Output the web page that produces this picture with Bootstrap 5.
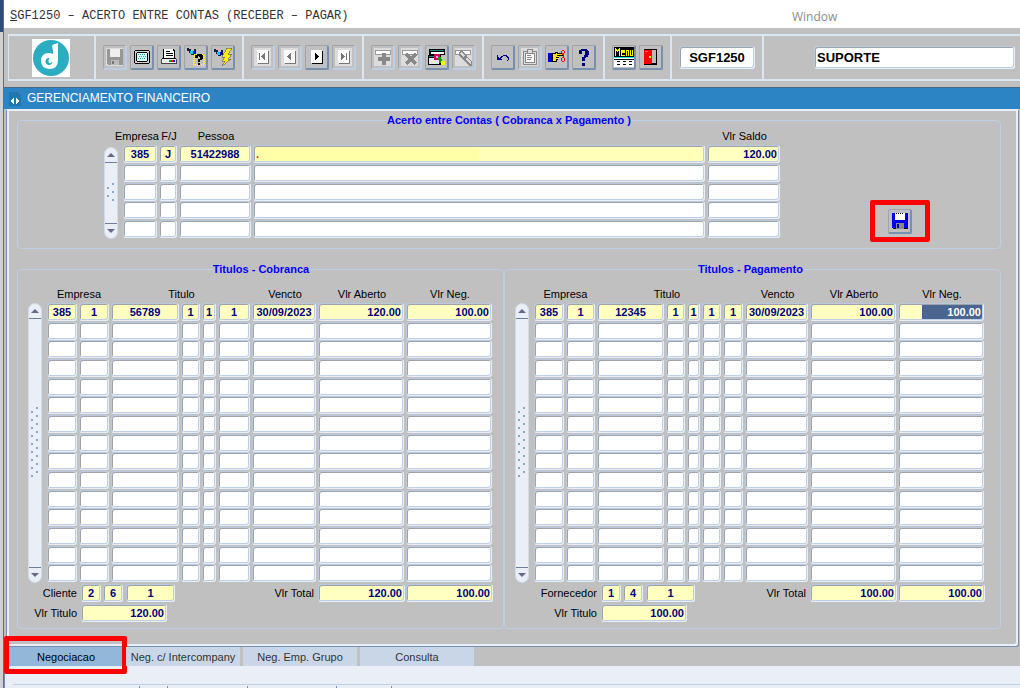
<!DOCTYPE html>
<html lang="pt-BR">
<head>
<meta charset="utf-8">
<meta name="viewport" content="width=device-width, initial-scale=1">
<title>SGF1250 - Acerto entre Contas</title>
<link href="https://cdn.jsdelivr.net/npm/bootstrap@5.3.0/dist/css/bootstrap.min.css" rel="stylesheet">
<style>
:root { --face:#c0c0c0; --pale:#e9eef7; --line:#bccfe6; --steel:#7590b0; --shade:#9fa3aa; --field:#ffffc0; --navy:#000080; }
body { font:11px/13px "Liberation Sans",Arial,sans-serif; color:#000; background:var(--face); }
button, input { font:inherit; }
.desk-edge { flex:0 0 4px; border-right:1px solid #6c6c6c; background:linear-gradient(#2a4a80 32px,#d0d0d0 32px); }
.app { min-width:0; }
.menu-line { height:28px; padding-left:6px; padding-top:6px; background:#fff; }
.menu-line a { color:#333; text-decoration:none; }
.menu-title { flex:0 0 782px; font:12px/16px "Liberation Mono","Courier New",monospace; padding-top:2px; }
.menu-line .menu-window { font:12px/16px "Open Sans",sans-serif; color:#8c8c8c; padding-top:3px; }
.tool-area { padding:6px 0 6px 4px; }
.tool-box { height:47px; border:2px solid #dbe6f5; border-width:2px 0 2px 1px; }
.tool-group { display:flex; align-items:center; gap:3px; padding:0 7px; border-right:2px solid #dbe6f5; }
.tool-group.snug { padding-right:6px; }
.tool-group.brand { flex:0 0 87px; padding-left:23px; }
.tool-group.program { flex:0 0 92px; }
.user-slot { padding:0 5px 0 50px; }
.tool-btn { width:24px; height:25px; padding:0; display:flex; align-items:center; justify-content:center; background:var(--face); border:1px solid var(--shade); border-right:2px solid var(--steel); border-bottom:2px solid var(--steel); border-radius:2px; }
.tool-btn:disabled { border-right-color:var(--line); border-bottom-color:var(--line); background:#dcdcdc; box-shadow:inset 0 0 0 2px var(--face); }
.tool-btn svg, .pic svg { display:block; shape-rendering:crispEdges; overflow:visible; }
.brand svg { shape-rendering:auto; }
.cell { display:block; width:100%; height:18px; padding:0 2px; margin:0; background:#fff; color:var(--navy); font-weight:bold; border:1px solid #b9c9de; border-right-color:var(--pale); border-bottom-color:var(--pale); border-radius:3px; box-shadow:inset 1px 1px var(--shade), inset -1px -1px var(--line); outline:0; }
.cell.big { height:23px; color:#000; font-size:13px; }
.cell.filled { background:var(--field); }
.cell.masked { background:linear-gradient(90deg,#ffffa8 50%,#ffffba 50%); color:#a04020; }
.cell.chosen { background:linear-gradient(90deg,transparent 23px,#4a6590 23px) var(--field); color:#fff; }
.title-bar { height:22px; background:#2c84c4; border-top:1px solid #47688a; color:#fff; font-size:12px; gap:6px; padding-left:5px; }
.work { margin:0 1px 0 2px; padding:3px 17px 17px 10px; border:1px solid var(--steel); border-top:2px solid var(--pale); box-shadow:inset 2px 0 var(--pale), inset -2px -2px var(--pale); border-radius:0 0 3px 0; }
.work fieldset { border:1px solid var(--line); border-radius:4px; min-width:0; }
.work legend { float:none; width:auto; margin:0 auto; padding:0; font-size:11px; line-height:13px; font-weight:bold; color:#00f; }
.saldo-set { padding-bottom:9px; }
.saldo-body { padding:0 70px 0 86px; }
.pair { display:grid; grid-template-columns:486fr 496fr; margin-top:14px; }
.pair fieldset { padding:9px 9px 6px 10px; }
.pair fieldset + fieldset { padding-right:14px; }
.block { display:flex; align-items:flex-end; gap:5px; }
.grid-table { width:100%; table-layout:fixed; }
.grid-table th { height:18px; padding:0; font-weight:normal; text-align:center; white-space:nowrap; vertical-align:middle; }
.grid-table td { padding:0 2px 0 0; vertical-align:top; }
.short { height:112px; }
.tall { height:298px; }
.bar { flex:0 0 14px; display:flex; flex-direction:column; background:var(--pale); border:1px solid #cfdcec; border-radius:7px; }
.bar-short { height:92px; }
.bar-tall { height:280px; }
.bar button { height:15px; padding:0; border:0; background:none; display:flex; align-items:center; justify-content:center; }
.bar button:first-child { border-bottom:1px solid #6f7f98; }
.bar button:last-child { border-top:1px solid #6f7f98; }
.grip { flex:1; margin:20px 2px; background:radial-gradient(circle at 1px 5px,#8fa6c2 1px,transparent 1px),radial-gradient(circle at 6px 1px,#8fa6c2 1px,transparent 1px); background-size:8px 8px; }
.bar-tall .grip { margin:88px 2px; }
.mark-red { border:5px solid #f00; border-radius:2px; padding:4px 13px 3px; margin:0 0 -3px 88px; }
.foot-line { display:flex; align-items:center; margin-top:1px; }
.foot-line + .foot-line { margin-top:2px; }
.foot-line label { text-align:right; padding-right:4px; white-space:nowrap; }
.w-lab1 { width:53px; } .w-lab2 { width:86px; }
.w-id { width:20px; margin-right:2px; } .w-seq { width:49px; margin-left:1px; } .w-val { width:86px; }
.w-sum { width:87px; } .w-sum + .w-sum { margin-left:1px; margin-right:1px; }
.tab-strip { gap:3px; padding-left:5px; }
.tab-btn { width:114px; height:19px; padding:2px 0 0; border:0; background:#c9d6e8; color:#333; position:relative; white-space:nowrap; }
.tab-btn.current { background:#93b7d9; color:#000; }
.tab-btn.current::after { content:""; position:absolute; inset:-11px -4px -8px -5px; border:5px solid #f00; border-radius:2px; }
.tab-page { background:var(--pale); border-left:1px solid var(--steel); padding:18px 0 0 8px; }
.next-head { border-top:1px solid var(--line); padding-top:1px; height:4px; }
.next-head i { border-right:1px solid var(--steel); }
</style>
</head>
<body>
<svg width="0" height="0" class="position-absolute" aria-hidden="true">
  <symbol id="i-up" viewBox="0 0 8 4"><path d="M4 0 8 4H0z" fill="#66688a"/></symbol>
  <symbol id="i-down" viewBox="0 0 8 4"><path d="M0 0H8L4 4z" fill="#66688a"/></symbol>
</svg>
<div class="d-flex min-vh-100">
<div class="desk-edge"></div>
<div class="app flex-fill d-flex flex-column">
  <nav class="menu-line d-flex align-items-start">
    <div class="menu-title"><a href="#"><u>S</u>GF1250 – ACERTO ENTRE CONTAS (RECEBER – PAGAR)</a></div>
    <a href="#" class="menu-window">Window</a>
  </nav>
  <div class="tool-area">
    <div class="tool-box d-flex">
      <div class="tool-group brand pic">
        <svg width="38" height="38" viewBox="0 0 38 38"><path fill="#fff" d="M0 0h38v38H0z"/><circle cx="19" cy="19" r="18" fill="#2bacc1"/><path d="M20 7q1-2 3-2l3-1v17q0 9-8.500 9Q9 29.500 9 22q0-8 8-8 2 0 4 1 0-5-1-8z" fill="#fff"/><path d="M18 19q-4.500-.5-4.500 3.500 0 3.500 4 3.500 3-.5 2.500-3.500Q19 25 17 24q-1.500-3 1-5z" fill="#2bacc1"/></svg>
      </div>
      <div class="tool-group">
        <button class="tool-btn" disabled aria-label="Salvar"><svg width="16" height="16"><path d="M0 0h16v16H1L0 15z" fill="#969696"/><path d="M3 0h10v8H3z" fill="#eee"/><path d="M4 11h8v5H4z" fill="#bbb"/><path d="M5 12h2v3H5z" fill="#777"/></svg></button>
        <button class="tool-btn" aria-label="Tela"><svg width="16" height="14"><path d="M1 0h14v1h1v12h-1v1H1v-1H0V1h1z"/><path d="M1 1h14v12H1z" fill="#d0d0d0"/><path d="M3 2h10v1h1v8h-1v1H3v-1H2V3h1z"/><path d="M3 3h10v8H3z" fill="#d8ffff"/><path d="M4 4.500h1m1 0h1m1 0h1m1 0h1M5 6.500h1m1 0h1m1 0h1m1 0h1M4 8.500h1m1 0h1m1 0h1m1 0h1" stroke="#20b0b0"/></svg></button>
        <button class="tool-btn" aria-label="Imprimir"><svg width="16" height="16"><path d="M3 0h9l2 2v8H3z" fill="#fff"/><path d="M2 0h1v9H2zM12 0h1v1h1v8h-1V2h-1zM5 2h4v1H5zM5 4h7v1H5zM5 6h7v1H5zM1 9h14v1H1z"/><path d="M0 10h16v5H0z" fill="#eee"/><path d="M0 10h1v4H0zM15 10h1v4h-1zM0 14h16v1H0z" fill="#444"/><path d="M8 11h3v2H8z" fill="#0a0"/><path d="M10 11h2v2h-2z" fill="#f00"/><path d="M12 11h2v2h-2z" fill="#00f"/></svg></button>
        <button class="tool-btn" aria-label="Entrar consulta"><svg width="18" height="18"><path d="M0 0h2v1h2v2h3V1h2v5H7v1H4V5H2V3H0z" fill="#124"/><path d="M3 3h3v3H3z" fill="#0cf"/><path d="M6 3h2v3H6z" fill="#00c"/><path d="M7 7h10v10H7z" fill="none" stroke="#ff0" stroke-width="2" stroke-dasharray="1 1"/><path d="M8 7h2V6h5v1h1v4h-1v1h-2v2h-2v-3h2V9h-1V8h-1v2H8zM11 15h2v2h-2z"/></svg></button>
        <button class="tool-btn" aria-label="Executar consulta"><svg width="18" height="18"><path d="M0 1h2v1h2v2h3V2h2v5H7v1H4V6H2V4H0z" fill="#124"/><path d="M3 4h3v3H3z" fill="#0cf"/><path d="M6 4h2v3H6z" fill="#00c"/><path d="M13 0h5l-4 6h4l-4 5h3l-9 7 3-5H8l3-4H8z" fill="#fff000" stroke="#444" stroke-width=".5"/></svg></button>
      </div>
      <div class="tool-group snug">
        <button class="tool-btn" disabled aria-label="Primeiro"><svg width="12" height="14"><path d="M1 1h11v13H1z" fill="#777"/><path d="M0 0h11v13H0z" fill="#fafafa"/><path d="M2 3h1v7H2zM8 3v7L4 7V6z" fill="#777"/></svg></button>
        <button class="tool-btn" disabled aria-label="Anterior"><svg width="12" height="14"><path d="M1 1h11v13H1z" fill="#777"/><path d="M0 0h11v13H0z" fill="#fafafa"/><path d="M7 3v7L3 7V6z" fill="#777"/></svg></button>
        <button class="tool-btn" aria-label="Próximo"><svg width="12" height="14"><path d="M1 1h11v13H1z"/><path d="M0 0h11v13H0z" fill="#fff"/><path d="M4 3v7l4-3V6z"/></svg></button>
        <button class="tool-btn" disabled aria-label="Último"><svg width="12" height="14"><path d="M1 1h11v13H1z" fill="#777"/><path d="M0 0h11v13H0z" fill="#fafafa"/><path d="M8 3h1v7H8zM3 3v7l4-3V6z" fill="#777"/></svg></button>
      </div>
      <div class="tool-group snug">
        <button class="tool-btn" disabled aria-label="Inserir"><svg width="16" height="16"><path d="M0 1h15v4H0z" fill="#fff" stroke="#999"/><path d="M7 4h4v4h4v4h-4v4H7v-4H3V8h4z" fill="#888"/></svg></button>
        <button class="tool-btn" disabled aria-label="Excluir"><svg width="16" height="16"><path d="M0 1h15v4H0z" fill="#fff" stroke="#999"/><path d="m4 5 10 10M14 5 4 15" stroke="#888" stroke-width="3"/></svg></button>
        <button class="tool-btn" aria-label="Limpar"><svg width="18" height="17"><path d="M1 0h16v6H1z"/><path d="M2 1h14v1H2z" fill="#088"/><path d="M3 3h13v2H3z" fill="#fff"/><path d="M0 6h13v10H0z"/><path d="M1 7h6v1H1z" fill="#088"/><path d="M1 15V9h5l5 1v5z" fill="#e8e8e8"/><path d="M6 5h6v6H6z" fill="#e0005c"/><path d="M8 7h2v2H8z" fill="#f9f"/><path d="M10 8h3v2h1v4h-3v-3h-1z" fill="#00a000"/><path d="M13 12h4v4h-4z" fill="#ff0"/></svg></button>
        <button class="tool-btn" disabled aria-label="Editar"><svg width="17" height="17"><path d="M0 1h15v4H0z" fill="#fff" stroke="#999"/><path d="M4 3 7 1 17 13v4h-3L4 6z" fill="#888"/><path d="M5 4 7 3 10 7 8 8zM10 10l2-2 4 5v2z" fill="#ddd"/></svg></button>
      </div>
      <div class="tool-group">
        <button class="tool-btn" aria-label="Desfazer"><svg width="14" height="10"><path d="M1 3v5h5v-1H5V6h1V5h1V4h3v1h1v1h1v2h-1v1h1V8h1V5h-1V4h-1V3H7v1H5v1H4v1H3V5H2V3z" fill="#000080"/></svg></button>
        <button class="tool-btn" disabled aria-label="Colar"><svg width="15" height="16"><path d="M1 2h13v13H1z" fill="#ddd" stroke="#888"/><path d="M3 4h9v9H3z" fill="#fff" stroke="#888"/><path d="M5 0h5v4H5z" fill="#ddd" stroke="#888"/><path d="M5 6h4v1H5zM5 8h5v1H5zM5 10h4v1H5z" fill="#888"/></svg></button>
        <button class="tool-btn" aria-label="Lista de valores"><svg width="18" height="14"><path d="M0 3h4v9H0z" fill="#0000d0"/><path d="M4 3h3V2h3v1h5v3h-4v2h-1v2H9v2H4z"/><path d="M5 4h3V3h1v1h5v1H9v1h2v1H8v1h2v1H8v2H5z" fill="#ffe000"/><path d="M13 1h1v2h-1zM16 1h1v2h-1zM14 0h2v1h-2zM14 3h1v2h-1zM15 3h1v4h-1zM14 7h2v1h-2zM13 8h1v3h-1zM16 8h1v3h-1zM14 11h2v1h-2z" fill="#f00"/></svg></button>
        <button class="tool-btn" aria-label="Ajuda"><svg width="11" height="17"><path d="M1 1h2V0h6v1h1v1h1v4h-1v2H8v1H7v3H4V8h2V6h1V2H4v3H1z" fill="#000080"/><path d="M4 14h3v3H4z" fill="#000080"/></svg></button>
      </div>
      <div class="tool-group">
        <button class="tool-btn" aria-label="Menu"><svg width="20" height="20"><path d="M0 10h20v10H0z" fill="#fff"/><path d="M0 0h20v10H0zM0 12h20v1H0zM3 14h3v1H3zM9 14h3v1H9zM15 14h3v1h-3zM3 17h3v1H3zM9 17h3v1H9zM15 17h3v1h-3z"/><path d="M0 10h20v1H0z" fill="#0ee"/><path d="M1 9V1h1v1h1v1h1V2h1V1h1v8H5V4H4v1H3V4H2v5zM7 3h4v3H8v2h3v1H7zM12 3h3v6h-1V4h-1v5h-1zM16 3h1v5h1V3h1v6h-3z" fill="#ff0"/></svg></button>
        <button class="tool-btn" aria-label="Sair"><svg width="14" height="16"><path d="M0 0h13v16H0z"/><path d="M7 1h5v13H7z" fill="#bbb"/><path d="M0 1h8v13H7v1H0z" fill="#f00"/><path d="M1 2h3v1H1z" fill="#f66"/><path d="M5 7h2v2H5z" fill="#ff0"/></svg></button>
      </div>
      <div class="tool-group program"><input class="cell big text-center" value="SGF1250" aria-label="Programa"></div>
      <div class="user-slot flex-fill d-flex align-items-center"><input class="cell big" value="SUPORTE" aria-label="Usuário"></div>
    </div>
  </div>
  <header class="title-bar d-flex align-items-center pic">
    <svg width="12" height="14"><path d="M0 0h8l4 4v10H0z" fill="#2276ad"/><path d="M5 6v6L1 9zM7 6v6l4-3z" fill="#fff"/></svg>
    <span>GERENCIAMENTO FINANCEIRO</span>
  </header>
  <main class="work">
    <fieldset class="saldo-set">
      <legend>Acerto entre Contas ( Cobranca x Pagamento )</legend>
      <div class="saldo-body d-flex align-items-end">
        <div class="block flex-fill">
          <div class="bar bar-short"></div>
          <table class="grid-table short" data-grid="saldo">
            <colgroup><col style="width:36px"><col style="width:20px"><col style="width:74px"><col><col style="width:75px"></colgroup>
            <thead><tr><th><div class="d-flex justify-content-end">Empresa</div></th><th>F/J</th><th>Pessoa</th><th></th><th>Vlr Saldo</th></tr></thead>
            <tbody></tbody>
          </table>
        </div>
        <div class="mark-red"><button class="tool-btn" aria-label="Gravar acerto"><svg width="16" height="16"><path d="M0 0h16v16H1L0 15z" fill="#0000f0"/><path d="M15 1h1v15H2v-1h13z"/><path d="M3 0h10v7H3z" fill="#fff"/><path d="M4 0h1v1H4zM6 0h1v1H6zM8 0h1v1H8zM10 0h1v1h-1z"/><path d="M4 10h8v6H4z" fill="#888"/><path d="M5 11h2v4H5z" fill="#0000c0"/></svg></button></div>
      </div>
    </fieldset>
    <div class="pair">
      <fieldset>
        <legend>Titulos - Cobranca</legend>
        <div class="block">
          <div class="bar bar-tall"></div>
          <table class="grid-table tall" data-grid="cobranca">
            <colgroup><col style="width:32px"><col style="width:32px"><col><col style="width:21px"><col style="width:16px"><col style="width:34px"><col style="width:66px"><col style="width:88px"><col style="width:88px"></colgroup>
            <thead><tr><th colspan="2">Empresa</th><th colspan="4">Titulo</th><th>Vencto</th><th>Vlr Aberto</th><th>Vlr Neg.</th></tr></thead>
            <tbody></tbody>
          </table>
        </div>
        <div class="foot-line">
          <label class="w-lab1" for="cli1">Cliente</label>
          <input class="cell filled text-center w-id" id="cli1" value="2"><input class="cell filled text-center w-id" value="6" aria-label="Cliente, dígito"><input class="cell filled text-center w-seq" value="1" aria-label="Cliente, sequência">
          <label class="ms-auto" for="tot1">Vlr Total</label>
          <input class="cell filled text-end w-sum" id="tot1" value="120.00"><input class="cell filled text-end w-sum" value="100.00" aria-label="Total negociado">
        </div>
        <div class="foot-line">
          <label class="w-lab1" for="vt1">Vlr Titulo</label><input class="cell filled text-end w-val" id="vt1" value="120.00">
        </div>
      </fieldset>
      <fieldset>
        <legend>Titulos - Pagamento</legend>
        <div class="block">
          <div class="bar bar-tall"></div>
          <table class="grid-table tall" data-grid="pagamento">
            <colgroup><col style="width:32px"><col style="width:31px"><col><col style="width:21px"><col style="width:15px"><col style="width:21px"><col style="width:22px"><col style="width:65px"><col style="width:88px"><col style="width:88px"></colgroup>
            <thead><tr><th colspan="2">Empresa</th><th colspan="5" class="pe-2">Titulo</th><th>Vencto</th><th>Vlr Aberto</th><th>Vlr Neg.</th></tr></thead>
            <tbody></tbody>
          </table>
        </div>
        <div class="foot-line">
          <label class="w-lab2" for="for1">Fornecedor</label>
          <input class="cell filled text-center w-id" id="for1" value="1"><input class="cell filled text-center w-id" value="4" aria-label="Fornecedor, dígito"><input class="cell filled text-center w-seq" value="1" aria-label="Fornecedor, sequência">
          <label class="ms-auto" for="tot2">Vlr Total</label>
          <input class="cell filled text-end w-sum" id="tot2" value="100.00"><input class="cell filled text-end w-sum" value="100.00" aria-label="Total negociado">
        </div>
        <div class="foot-line">
          <label class="w-lab2" for="vt2">Vlr Titulo</label><input class="cell filled text-end w-val" id="vt2" value="100.00">
        </div>
      </fieldset>
    </div>
  </main>
  <div class="tab-strip d-flex" role="tablist">
    <button class="tab-btn current" role="tab">Negociacao</button>
    <button class="tab-btn" role="tab">Neg. c/ Intercompany</button>
    <button class="tab-btn" role="tab">Neg. Emp. Grupo</button>
    <button class="tab-btn" role="tab">Consulta</button>
  </div>
  <div class="tab-page flex-fill">
    <div class="next-head d-flex"><i style="width:127px"></i><i style="width:28px"></i><i style="width:80px"></i><i style="width:89px"></i><i style="width:55px"></i></div>
  </div>
</div>
</div>
<script src="https://cdn.jsdelivr.net/npm/bootstrap@5.3.0/dist/js/bootstrap.bundle.min.js"></script>
<script>
// First record and number of rows of every block
const grids = {
  saldo: { rows: 5, first: ['385', 'J', '51422988', '.', '120.00'], left: [3], right: [4], extra: { 3: 'masked' } },
  cobranca: { rows: 15, first: ['385', '1', '56789', '1', '1', '1', '30/09/2023', '120.00', '100.00'], left: [], right: [7, 8], extra: {} },
  pagamento: { rows: 15, first: ['385', '1', '12345', '1', '1', '1', '1', '30/09/2023', '100.00', '100.00'], left: [], right: [8, 9], extra: { 9: 'chosen' } }
};
document.querySelectorAll('[data-grid]').forEach(table => {
  const g = grids[table.dataset.grid];
  for (let r = 0; r < g.rows; r++) {
    const tr = table.tBodies[0].insertRow();
    g.first.forEach((value, c) => {
      const input = document.createElement('input');
      const align = g.left.includes(c) ? 'text-start' : g.right.includes(c) ? 'text-end' : 'text-center';
      input.className = 'cell ' + align + (r ? '' : ' filled ' + (g.extra[c] || ''));
      input.value = r ? '' : value;
      input.setAttribute('aria-label', 'Linha ' + (r + 1) + ', coluna ' + (c + 1));
      tr.insertCell().append(input);
    });
  }
});
document.querySelectorAll('.bar').forEach(bar => {
  bar.innerHTML = '<button aria-label="Subir"><svg width="8" height="4"><use href="#i-up"/></svg></button><div class="grip"></div><button aria-label="Descer"><svg width="8" height="4"><use href="#i-down"/></svg></button>';
});
</script>
</body>
</html>
